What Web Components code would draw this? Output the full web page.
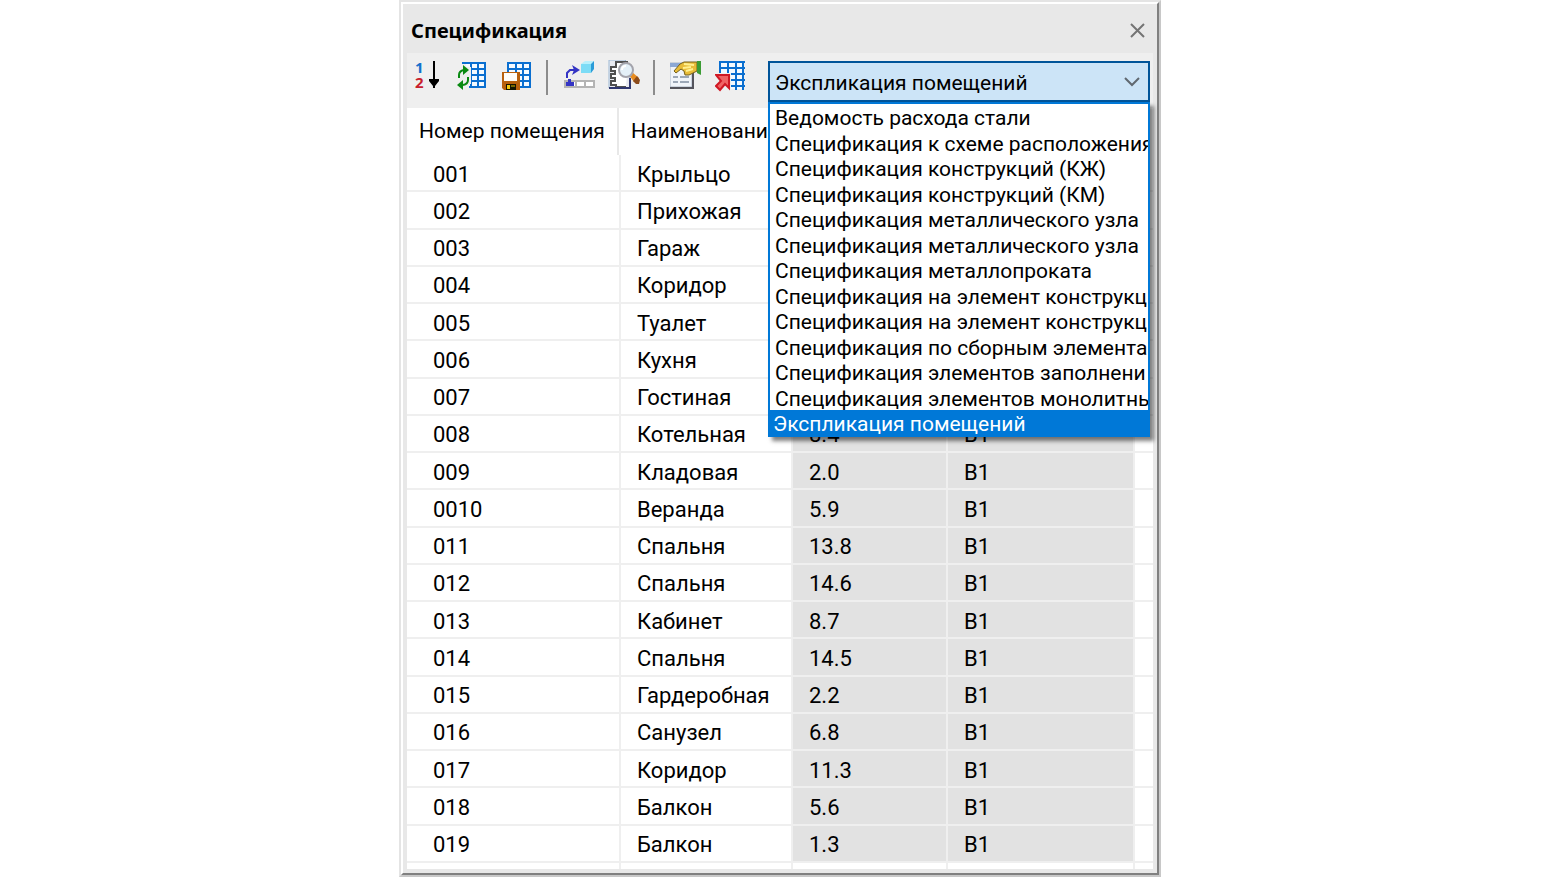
<!DOCTYPE html>
<html lang="ru">
<head>
<meta charset="utf-8">
<title>Спецификация</title>
<style>
  html, body { height: 100%; margin: 0; }
  body { background: #fff; color: #000; font-family: Roboto, "Liberation Sans", sans-serif; }
</style>
</head>
<body>
<spec-panel heading="Спецификация">
  <spec-toolbar slot="toolbar">
    <tool-button icon="sort" label="Сортировка"></tool-button>
    <tool-button icon="refresh" label="Обновить таблицу"></tool-button>
    <tool-button icon="save" label="Сохранить таблицу"></tool-button>
    <tool-separator></tool-separator>
    <tool-button icon="assign" label="Назначить"></tool-button>
    <tool-button icon="find" label="Найти"></tool-button>
    <tool-separator></tool-separator>
    <tool-button icon="props" label="Свойства"></tool-button>
    <tool-button icon="export" label="Экспорт таблицы"></tool-button>
    <spec-picker></spec-picker>
  </spec-toolbar>
  <spec-table></spec-table>
</spec-panel>

<script>
"use strict";

const SPECS = [
  "Ведомость расхода стали",
  "Спецификация к схеме расположения",
  "Спецификация конструкций (КЖ)",
  "Спецификация конструкций (КМ)",
  "Спецификация металлического узла",
  "Спецификация металлического узла",
  "Спецификация металлопроката",
  "Спецификация на элемент конструкц",
  "Спецификация на элемент конструкц",
  "Спецификация по сборным элемента",
  "Спецификация элементов заполнени",
  "Спецификация элементов монолитны",
  "Экспликация помещений",
];

const ROOMS = [
  ["001", "Крыльцо", "", ""],
  ["002", "Прихожая", "", ""],
  ["003", "Гараж", "", ""],
  ["004", "Коридор", "", ""],
  ["005", "Туалет", "", ""],
  ["006", "Кухня", "", ""],
  ["007", "Гостиная", "", ""],
  ["008", "Котельная", "8.4", "В1"],
  ["009", "Кладовая", "2.0", "В1"],
  ["0010", "Веранда", "5.9", "В1"],
  ["011", "Спальня", "13.8", "В1"],
  ["012", "Спальня", "14.6", "В1"],
  ["013", "Кабинет", "8.7", "В1"],
  ["014", "Спальня", "14.5", "В1"],
  ["015", "Гардеробная", "2.2", "В1"],
  ["016", "Санузел", "6.8", "В1"],
  ["017", "Коридор", "11.3", "В1"],
  ["018", "Балкон", "5.6", "В1"],
  ["019", "Балкон", "1.3", "В1"],
];

const GRID = `
  <path d="M6 2h24v26H6z" fill="#f4faff"/>
  <path d="M6 3h24M6 9h24M6 15h24M6 21h24M6 27h24M7 2v26M15 2v26M22 2v26M29 2v26" fill="none" stroke="#0b6fd0" stroke-width="2"/>`;

const ICONS = {
  sort: `
    <text x="4" y="13" font-family="Open Sans, sans-serif" font-size="15" font-weight="700" fill="#1470cc">1</text>
    <text x="4" y="28" font-family="Open Sans, sans-serif" font-size="15" font-weight="700" fill="#c8202c">2</text>
    <path d="M22 1h2v18h4v2l-4 5v2h-2v-2l-4-5v-2h4z" fill="#000"/>`,
  refresh: `${GRID}
    <path d="M0 4h10v3h5v17h-2v7H0z" fill="#efefef"/>
    <path d="M3 18v-3q0-4 5-5" fill="none" stroke="#0a8a12" stroke-width="2"/>
    <path d="M7 5l6 5-6 5z" fill="#0a8a12"/>
    <path d="M12 17v3q0 4-5 5" fill="none" stroke="#0a8a12" stroke-width="2"/>
    <path d="M7 20v10l-6-5z" fill="#0a8a12"/>`,
  save: `${GRID}
    <path d="M1 12h18v18H3l-2-2z" fill="#b8600c"/>
    <path d="M3 13h13v8H3z" fill="#fffdf8"/>
    <path d="M5 24h10v6H5z" fill="#141400"/>
    <path d="M6 25h3v4H6z" fill="#f2c80c"/>
    <path d="M10 25h4v2h-4z" fill="#7a6800"/>`,
  assign: `
    <path d="M2 21h29v6H2z" fill="#fff" stroke="#b4b4b4" stroke-width="2"/>
    <path d="M13 21v6M22 21v6" stroke="#b4b4b4" stroke-width="2"/>
    <path d="M3 26v-4h2v-3h3v3h3v4z" fill="#3434c4"/>
    <path d="M4 18v-5l3-3h7" fill="none" stroke="#3434c4" stroke-width="2"/>
    <path d="M9 5l8 5-8 5 2-5z" fill="#3434c4"/>
    <path d="M18 4l4-3h9l-3 3z" fill="#b8f0fc"/>
    <path d="M18 4h10v9H18z" fill="#7cdcf6"/>
    <path d="M28 4l3-3v8l-3 4z" fill="#2a9cd8"/>`,
  find: `
    <path d="M1 0h16l5 5v23H1z" fill="#e8eaf0" stroke="#9cb8d4"/>
    <path d="M20 2H8v5H3v4h4v3H3v4h4v3H3v4h5v2h10" fill="#fff" stroke="#505050" stroke-width="2"/>
    <path d="M1 28h21V18" fill="none" stroke="#303870" stroke-width="2"/>
    <path d="M21 15l3-3 7 6-1 4h-4z" fill="#e88c20"/>
    <path d="M25 21l4-5 3 4-1 4h-3z" fill="#8c4c1c"/>
    <circle cx="18" cy="10" r="7" fill="#e4f0f8" stroke="#a4a4ac" stroke-width="2"/>
    <path d="M14 10q0-4 4-4" fill="none" stroke="#fff" stroke-width="2"/>`,
  props: `
    <path d="M0 3h22v24H0z" fill="#f0f4fa" stroke="#a8b4c4"/>
    <path d="M0 3h22v4H0z" fill="#8ca8d4"/>
    <path d="M0 28h23V4" fill="none" stroke="#54545c" stroke-width="2"/>
    <path d="M3 17h5M10 17h9M3 22h5M10 22h9" stroke="#9ca8b8" stroke-width="2"/>
    <path d="M4 11l6-7 4-2h13v9l-8 4h-4l-1-4-3-2-5 4z" fill="#e8bc38" stroke="#74601c"/>
    <path d="M14 4l10 1M13 8l8-1M16 11l7-2" stroke="#fff090" stroke-width="2"/>
    <path d="M27 1h4v14l-4-2z" fill="#3c9c34"/>`,
  export: `
    <path d="M4 1h25v28H4z" fill="#f4faff"/>
    <path d="M4 2h26M4 8h26M4 14h26M4 20h26M4 26h26M5 1v29M13 1v29M21 1v29M28 1v29" fill="none" stroke="#0b6fd0" stroke-width="2"/>
    <path d="M0 13h16v18H0z" fill="#efefef"/>
    <path d="M1 15h13v13l-4-4-5 6-4-4 5-5z" fill="#f06464" stroke="#d01824" stroke-width="2"/>`,
};

class SpecPanel extends HTMLElement {
  constructor() {
    super();
    this.attachShadow({ mode: "open" }).innerHTML = `
    <style>
      :host {
        display: block;
        box-sizing: border-box;
        max-width: 762px;
        height: 100%;
        margin: 0 auto;
        border: 2px solid;
        border-color: #e4e4e4 #c8c8c8 #c8c8c8 #e4e4e4;
      }
      section {
        display: flex;
        flex-direction: column;
        box-sizing: border-box;
        height: 100%;
        padding: 0 4px 4px;
        border: 2px solid;
        border-color: #fff #808080 #808080 #fff;
        background: #e8e8e8;
      }
      header {
        display: flex;
        align-items: center;
        justify-content: space-between;
        height: 49px;
        padding: 0 8px 0 4px;
        flex: none;
      }
      h1 {
        margin: 0;
        padding-top: 4px;
        font: 700 20px/28px "Noto Sans", "Open Sans", sans-serif;
      }
      button {
        width: 16px;
        height: 16px;
        margin-top: 4px;
        padding: 0;
        border: 0;
        background: none;
      }
      svg { display: block; }
    </style>
    <section>
      <header>
        <h1>${this.getAttribute("heading")}</h1>
        <button type="button" aria-label="Закрыть">
          <svg width="16" height="16" viewBox="0 0 16 16">
            <path d="M2 1l13 13M15 1L2 14" stroke="#747474" stroke-width="2"/>
          </svg>
        </button>
      </header>
      <slot name="toolbar"></slot>
      <slot></slot>
    </section>`;
  }
}

customElements.define("spec-panel", SpecPanel);

//===================================================

class SpecToolbar extends HTMLElement {
  constructor() {
    super();
    this.attachShadow({ mode: "open" }).innerHTML = `
    <style>
      :host {
        display: flex;
        align-items: flex-start;
        gap: 13px;
        box-sizing: border-box;
        flex: none;
        height: 55px;
        padding: 7px 3px 0 4px;
        background: #efefef;
      }
      ::slotted(spec-picker) { flex: 1; min-width: 0; margin: 1px 0 0 8px; }
    </style>
    <slot></slot>`;
  }
}

customElements.define("spec-toolbar", SpecToolbar);

//===================================================

class ToolButton extends HTMLElement {
  constructor() {
    super();
    this.attachShadow({ mode: "open" }).innerHTML = `
    <style>
      :host { display: block; flex: none; }
      button { display: block; width: 32px; height: 32px; padding: 0; border: 0; background: none; }
      button:hover { background: #d8e8f4; }
      svg { display: block; }
    </style>
    <button type="button" aria-label="${this.getAttribute("label")}">
      <svg width="32" height="32" viewBox="0 0 32 32">${ICONS[this.getAttribute("icon")]}</svg>
    </button>`;
  }
}

customElements.define("tool-button", ToolButton);

class ToolSeparator extends HTMLElement {
  constructor() {
    super();
    this.attachShadow({ mode: "open" }).innerHTML = `
    <style>
      :host { display: block; flex: none; width: 2px; height: 35px; margin-right: 2px; background: #8c8c8c; }
    </style>`;
  }
}

customElements.define("tool-separator", ToolSeparator);

//===================================================

class SpecPicker extends HTMLElement {
  constructor() {
    super();
    const last = SPECS.length - 1;
    const options = SPECS.map(
      (name, i) => `<option${i === last ? " selected" : ""}>${name}</option>`
    ).join("");
    const items = SPECS.map(
      (name, i) => `<li role="option" aria-selected="${i === last}">${name}</li>`
    ).join("");

    this.attachShadow({ mode: "open" }).innerHTML = `
    <style>
      :host { display: block; position: relative; font-size: 21px; }
      select {
        display: block;
        appearance: none;
        box-sizing: border-box;
        width: 100%;
        height: 41px;
        margin: 0;
        padding: 2px 32px 0 5px;
        border: 2px solid #005499;
        border-radius: 0;
        outline: 0;
        background: #cce4f7;
        color: #000;
        font: inherit;
      }
      svg { position: absolute; top: 15px; right: 9px; pointer-events: none; }
      ul {
        position: absolute;
        z-index: 1;
        top: 100%;
        left: 0;
        right: 0;
        margin: 0;
        padding: 0;
        list-style: none;
        border-top: 2px solid #0078d7;
        background: #fff;
        box-shadow: 4px 4px 4px rgba(0, 0, 0, 0.5);
      }
      li {
        height: 26px;
        padding-left: 5px;
        border: solid #0078d7;
        border-width: 0 2px;
        overflow: hidden;
        line-height: 28px;
        white-space: nowrap;
      }
      li:nth-child(even) { height: 25px; }
      li:last-child { height: 27px; }
      li[aria-selected="true"] { padding-left: 3px; background: #0078d7; color: #fff; }
    </style>
    <select aria-label="Вид спецификации">${options}</select>
    <svg width="18" height="12" viewBox="0 0 18 12">
      <path d="M2 2l7 7 7-7" fill="none" stroke="#606870" stroke-width="2"/>
    </svg>
    <ul role="listbox" aria-label="Вид спецификации">${items}</ul>`;
  }

  connectedCallback() {
    const select = this.shadowRoot.querySelector("select");
    const items = [...this.shadowRoot.querySelectorAll("li")];
    const mark = (idx) => {
      select.selectedIndex = idx;
      items.forEach((li, i) => li.setAttribute("aria-selected", i === idx));
    };
    items.forEach((li, i) => li.addEventListener("click", () => mark(i)));
    select.addEventListener("change", () => mark(select.selectedIndex));
  }
}

customElements.define("spec-picker", SpecPicker);

//===================================================

class SpecTable extends HTMLElement {
  constructor() {
    super();
    const rows = ROOMS.map(
      (room) => `<tr>${room.map((v) => `<td>${v}</td>`).join("")}<td></td></tr>`
    ).join("");

    this.attachShadow({ mode: "open" }).innerHTML = `
    <style>
      :host { display: block; flex: 1; min-height: 0; background: #fff; font-size: 22px; line-height: 28px; }
      table { width: 100%; height: 100%; table-layout: fixed; border-collapse: separate; border-spacing: 0; }
      .num { width: 214px; }
      .name { width: 172px; }
      .area { width: 155px; }
      .cat { width: 187px; }
      th {
        height: 47px;
        padding: 0 2px 0 0;
        font-size: 21px;
        font-weight: 400;
        text-align: left;
        white-space: nowrap;
      }
      th span { display: block; padding-left: 10px; line-height: 47px; border-right: 2px solid #e8e8e8; }
      th:first-child span { padding-left: 12px; }
      td {
        padding: 4px 0 0 16px;
        border: solid #efefef;
        border-width: 0 2px 2px 0;
        white-space: nowrap;
      }
      td:first-child { padding-left: 26px; }
      td:last-child { border-right: 0; }
      tbody td:nth-child(3), tbody td:nth-child(4) { background: #e2e2e2; }
      tfoot td { height: 6px; padding: 0; border-bottom: 0; }
    </style>
    <table>
      <colgroup><col class="num"><col class="name"><col class="area"><col class="cat"><col></colgroup>
      <thead>
        <tr>
          <th><span>Номер помещения</span></th>
          <th><span>Наименование</span></th>
          <th></th>
          <th></th>
          <th></th>
        </tr>
      </thead>
      <tbody>${rows}</tbody>
      <tfoot><tr><td></td><td></td><td></td><td></td><td></td></tr></tfoot>
    </table>`;
  }
}

customElements.define("spec-table", SpecTable);
</script>
</body>
</html>
